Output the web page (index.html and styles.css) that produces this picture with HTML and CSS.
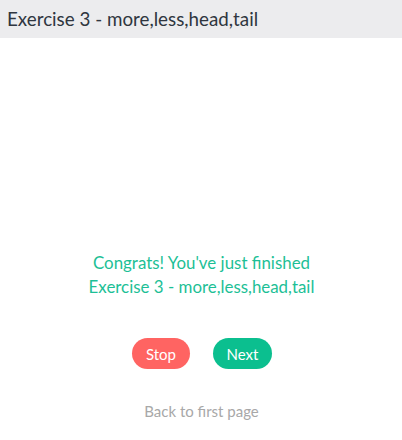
FILE: index.html
```html
<!DOCTYPE html>
<html>
<head>
<meta charset="utf-8">
<link rel="stylesheet" href="styles.css">
</head>
<body>
<header class="topbar">Exercise 3 - more,less,head,tail</header>
<main class="content">
  <p class="congrats">Congrats! You've just finished<br>Exercise 3 - more,less,head,tail</p>
  <div class="actions">
    <button class="btn btn-stop">Stop</button>
    <button class="btn btn-next">Next</button>
  </div>
  <a class="back" href="#">Back to first page</a>
</main>
</body>
</html>
```
FILE: styles.css
```css
html, body {
  margin: 0;
  padding: 0;
  background: #ffffff;
  font-family: Lato, "Open Sans", sans-serif;
}
.topbar {
  height: 38px;
  line-height: 38px;
  background: #ececee;
  color: #2f3640;
  font-size: 18.8px;
  padding-left: 7px;
}
.content {
  display: flex;
  flex-direction: column;
  align-items: center;
}
.congrats {
  margin: 213px 0 0 0;
  padding-left: 1px;
  text-align: center;
  color: #1dbf96;
  font-size: 16.9px;
  line-height: 24px;
}
.actions {
  display: flex;
  gap: 23px;
  margin-top: 39px;
  padding-left: 2px;
}
.btn {
  border: none;
  border-radius: 16px;
  height: 31px;
  padding: 0;
  color: #ffffff;
  font-family: Lato, sans-serif;
  font-size: 15px;
}
.btn-stop { background: #ff6462; width: 58px; }
.btn-next { background: #0bbf8f; width: 59px; }
.back {
  margin-top: 33px;
  color: #a8a8a8;
  font-size: 15px;
  text-decoration: none;
  padding-left: 1px;
}
```
